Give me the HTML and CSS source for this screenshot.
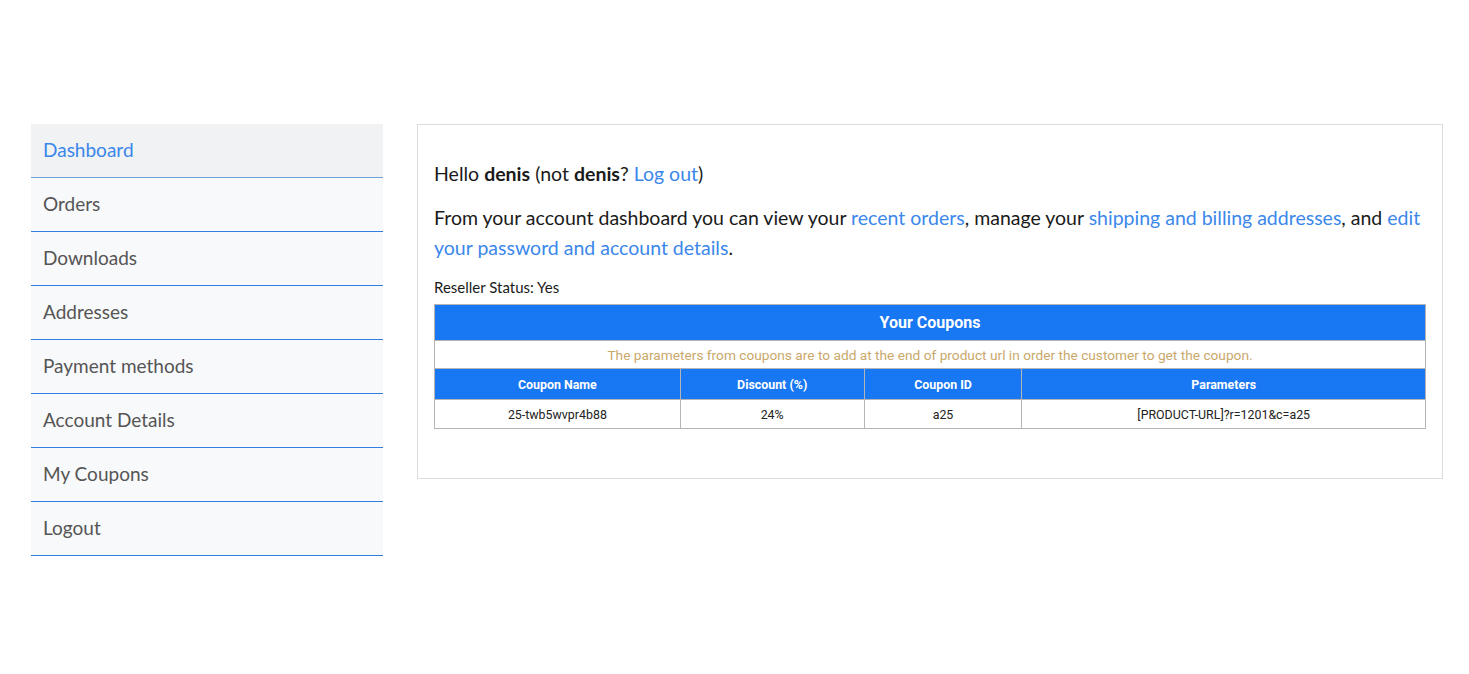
FILE: index.html
```html
<!DOCTYPE html>
<html>
<head>
<meta charset="utf-8">
<link rel="stylesheet" href="styles.css">
</head>
<body>
<div class="page">
  <nav class="side-nav">
    <a class="nav-item active" href="#">Dashboard</a>
    <a class="nav-item" href="#">Orders</a>
    <a class="nav-item" href="#">Downloads</a>
    <a class="nav-item" href="#">Addresses</a>
    <a class="nav-item" href="#">Payment methods</a>
    <a class="nav-item" href="#">Account Details</a>
    <a class="nav-item" href="#">My Coupons</a>
    <a class="nav-item" href="#">Logout</a>
  </nav>
  <main class="content">
    <p class="hello">Hello <strong>denis</strong> (not <strong>denis</strong>? <a href="#">Log out</a>)</p>
    <p class="intro">From your account dashboard you can view your <a href="#">recent orders</a>, manage your <a href="#">shipping and billing addresses</a>, and <a href="#">edit your password and account details</a>.</p>
    <p class="reseller">Reseller Status: Yes</p>
    <table class="coupons">
      <colgroup>
        <col class="c1"><col class="c2"><col class="c3"><col class="c4">
      </colgroup>
      <tr class="title-row"><th colspan="4">Your Coupons</th></tr>
      <tr class="note-row"><td colspan="4">The parameters from coupons are to add at the end of product url in order the customer to get the coupon.</td></tr>
      <tr class="head-row"><th>Coupon Name</th><th>Discount (%)</th><th>Coupon ID</th><th>Parameters</th></tr>
      <tr class="data-row"><td>25-twb5wvpr4b88</td><td>24%</td><td>a25</td><td>[PRODUCT-URL]?r=1201&amp;c=a25</td></tr>
    </table>
  </main>
</div>
</body>
</html>
```
FILE: styles.css
```css
html, body {
  margin: 0;
  padding: 0;
  background: #fff;
}
body {
  font-family: "Lato", "Open Sans", sans-serif;
  color: #1a1a1a;
}
.page {
  display: flex;
  align-items: flex-start;
  gap: 34px;
  padding: 124px 27px 0 31px;
}
.side-nav {
  width: 352px;
  flex: none;
  display: flex;
  flex-direction: column;
}
.nav-item {
  display: flex;
  align-items: center;
  height: 50px;
  padding: 0 12px 3px 12px;
  background: #f8f9fa;
  border-bottom: 1px solid #2f7fe0;
  color: #555;
  font-size: 19px;
  text-decoration: none;
}
.nav-item.active {
  background: #f1f2f4;
  color: #3b87ea;
  border-bottom-color: #6fa3d8;
}
.content {
  flex: 1;
  border: 1px solid #dcdcdc;
  padding: 34px 16px 49px 16px;
}
.content p {
  margin: 0;
}
.content a {
  color: #3b87ea;
  text-decoration: none;
}
.hello {
  font-size: 19.5px;
  line-height: 30px;
  margin-bottom: 14px !important;
}
.hello strong {
  font-weight: 700;
}
.intro {
  font-size: 19.5px;
  line-height: 30px;
  margin-bottom: 14px !important;
}
.reseller {
  font-size: 15px;
  line-height: 20px;
  margin-bottom: 7px !important;
}
.coupons {
  width: 992px;
  border-collapse: collapse;
  font-family: "Roboto", sans-serif;
  font-size: 12.4px;
  text-align: center;
}
.coupons .c1 { width: 246px; }
.coupons .c2 { width: 184px; }
.coupons .c3 { width: 158px; }
.coupons .c4 { width: 404px; }
.coupons th, .coupons td {
  border: 1px solid #b5b5b5;
  padding: 0 6px;
}
.title-row th {
  background: #1877f2;
  color: #fff;
  font-size: 16px;
  font-weight: 700;
  height: 35px;
}
.note-row td {
  color: #c9a86a;
  font-size: 13.7px;
  height: 27px;
}
.head-row th {
  background: #1877f2;
  color: #fff;
  font-weight: 700;
  height: 30px;
}
.data-row td {
  color: #222;
  height: 28px;
}
```
